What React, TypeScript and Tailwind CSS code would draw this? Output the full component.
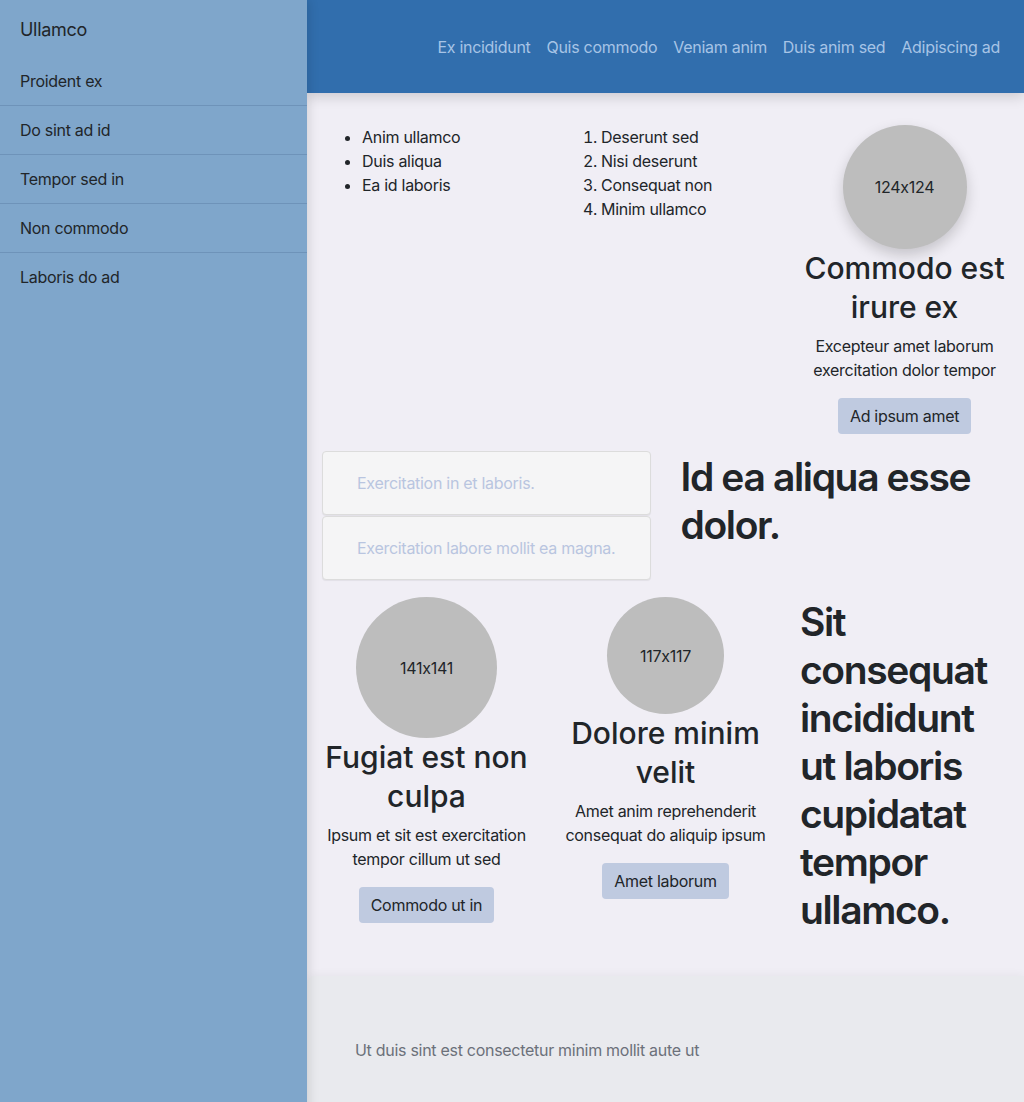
import React from "react";

const navItems = ["Proident ex", "Do sint ad id", "Tempor sed in", "Non commodo", "Laboris do ad"];
const topLinks = ["Ex incididunt", "Quis commodo", "Veniam anim", "Duis anim sed", "Adipiscing ad"];

function Circle({ size, label, shadow }: { size: number; label: string; shadow?: boolean }) {
  return (
    <div
      className={
        "rounded-full bg-[#bdbdbd] flex items-center justify-center text-[16px] text-[#212529] shrink-0 [font-feature-settings:'calt'_0]" +
        (shadow ? " shadow-[0_6px_14px_rgba(0,0,0,0.18)]" : "")
      }
      style={{ width: size, height: size }}
    >
      {label}
    </div>
  );
}

function Card({
  size,
  label,
  title,
  desc,
  button,
  shadow,
}: {
  size: number;
  label: string;
  title: string;
  desc: string;
  button: string;
  shadow?: boolean;
}) {
  return (
    <div className="flex flex-col items-center text-center">
      <Circle size={size} label={label} shadow={shadow} />
      <h3 className="text-[30px] leading-[39px] font-medium tracking-normal text-[#212529]">{title}</h3>
      <p className="mt-[7px] text-[16px] leading-6 text-[#212529]">{desc}</p>
      <button className="mt-4 h-9 px-3 rounded bg-[#bfcae0] text-[16px] text-[#212529]">{button}</button>
    </div>
  );
}

export default function App() {
  return (
    <div className="flex min-h-[1102px] font-['Inter',sans-serif] tracking-[-0.018em] text-[#212529]">
      <aside className="w-[307px] shrink-0 bg-[#7fa6cb] relative z-20 shadow-[2px_0_10px_rgba(0,0,0,0.12)]">
        <div className="h-[57px] flex items-center px-5 pt-px text-[18px] text-[#212529]">Ullamco</div>
        <ul className="divide-y divide-[#6e93b9]">
          {navItems.map((n) => (
            <li key={n} className="px-5 py-3 leading-6 text-[16px] text-[#212529]">
              {n}
            </li>
          ))}
        </ul>
      </aside>
      <div className="flex-1 flex flex-col min-w-0 bg-[#f0eef5]">
        <header className="h-[93px] bg-[#316ead] relative z-10 shadow-[0_4px_12px_rgba(0,0,0,0.15)] flex items-center justify-end gap-4 pr-6">
          {topLinks.map((l) => (
            <a key={l} className="text-[16px] text-[#a7c4e6]">
              {l}
            </a>
          ))}
        </header>
        <main className="bg-[#f0eef5] px-[15px] pt-8 pb-[42px] flex flex-col">
          <div className="grid grid-cols-3 gap-[30px]">
            <ul className="list-disc pl-10 text-[16px] leading-6">
              <li>Anim ullamco</li>
              <li>Duis aliqua</li>
              <li>Ea id laboris</li>
            </ul>
            <ol className="list-decimal pl-10 text-[16px] leading-6">
              <li>Deserunt sed</li>
              <li>Nisi deserunt</li>
              <li>Consequat non</li>
              <li>Minim ullamco</li>
            </ol>
            <Card
              size={124}
              label="124x124"
              title="Commodo est irure ex"
              desc="Excepteur amet laborum exercitation dolor tempor"
              button="Ad ipsum amet"
              shadow
            />
          </div>
          <div className="mt-[17px] grid grid-cols-2 gap-[30px]">
            <div className="flex flex-col gap-px">
              <div className="h-16 flex items-center px-[34px] bg-[#f5f5f6] border border-[#dcdcdc] rounded shadow-[0_1px_1px_rgba(0,0,0,0.06)] text-[16px] text-[#b9c5e0]">
                Exercitation in et laboris.
              </div>
              <div className="h-16 flex items-center px-[34px] bg-[#f5f5f6] border border-[#dcdcdc] rounded shadow-[0_1px_1px_rgba(0,0,0,0.06)] text-[16px] text-[#b9c5e0]">
                Exercitation labore mollit ea magna.
              </div>
            </div>
            <h2 className="mt-[2px] text-[39px] leading-[48px] font-semibold tracking-[-0.035em] text-[#212529]">
              Id ea aliqua esse dolor.
            </h2>
          </div>
          <div className="mt-[17px] grid grid-cols-3 gap-[30px]">
            <Card
              size={141}
              label="141x141"
              title="Fugiat est non culpa"
              desc="Ipsum et sit est exercitation tempor cillum ut sed"
              button="Commodo ut in"
            />
            <Card
              size={117}
              label="117x117"
              title="Dolore minim velit"
              desc="Amet anim reprehenderit consequat do aliquip ipsum"
              button="Amet laborum"
            />
            <h2 className="mt-px text-[39px] leading-[48px] font-semibold tracking-[-0.035em] text-[#212529]">
              Sit consequat incididunt ut laboris cupidatat tempor ullamco.
            </h2>
          </div>
        </main>
        <footer className="flex-1 bg-[#e9eaee] rounded-tl-lg shadow-[0_-2px_8px_rgba(0,0,0,0.04)] pl-12 pt-[62px] pb-16 text-[16px] leading-6 text-[#6c717a]">
          Ut duis sint est consectetur minim mollit aute ut
        </footer>
      </div>
    </div>
  );
}
